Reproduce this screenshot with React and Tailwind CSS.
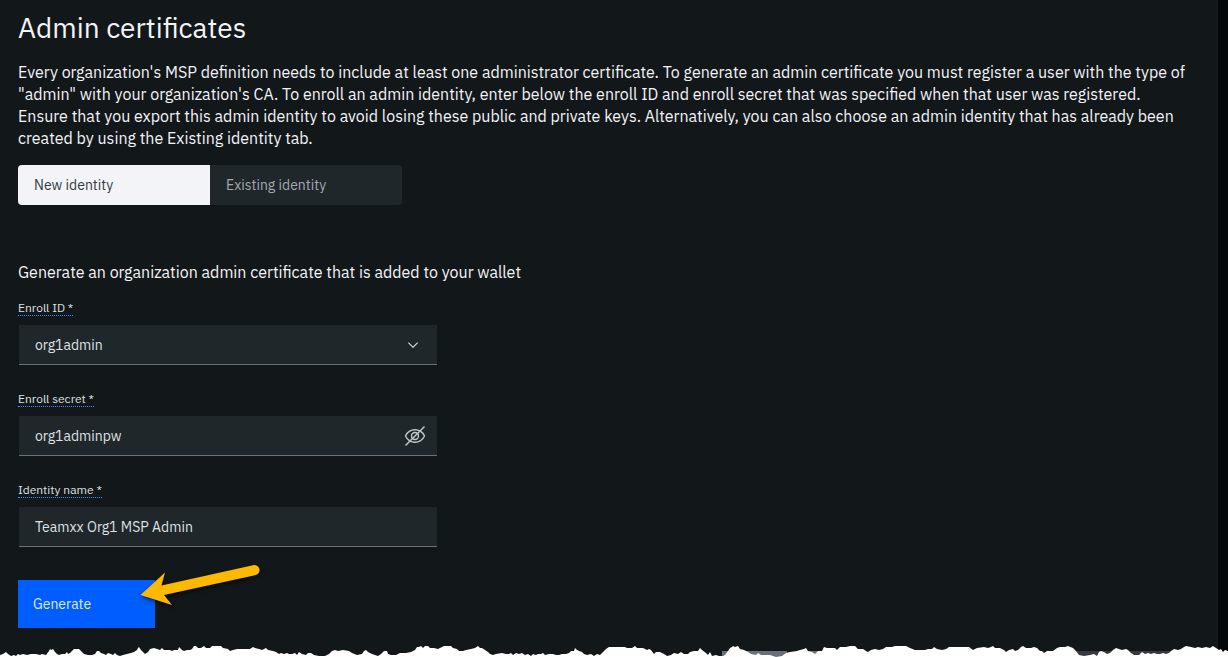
import { useState } from "react";

const edgePoints =
  "0,13 3,12 6,10 8,12 11,14 14,13 16,14 18,12 20,13 23,12 27,13 31,12 36,12 40,13 42,12 46,13 49,9 50,7 51,8 53,7 55,10 57,12 59,13 62,12 65,12 67,10 68,12 70,11 74,7 77,7 79,7 82,10 84,12 88,13 92,13 95,12 97,9 99,9 101,11 104,12 106,13 108,11 111,12 113,13 115,11 117,13 120,14 123,13 127,12 131,11 134,10 137,8 138,6 139,5 141,8 143,10 145,12 148,10 150,7 154,6 157,7 160,8 162,6 164,8 167,8 170,8 172,9 174,8 178,8 179,5 182,8 184,9 187,8 190,8 192,7 194,4 196,4 198,6 201,6 204,4 206,6 210,6 212,4 221,4 223,6 228,7 230,9 233,8 237,7 250,7 253,5 255,6 259,7 262,8 264,7 266,6 268,8 273,9 276,10 279,12 281,11 284,12 287,11 289,12 292,12 295,11 297,13 299,10 302,12 306,13 308,11 311,11 314,13 319,14 325,14 329,12 332,9 335,8 338,9 343,8 349,9 352,11 357,13 362,12 364,9 366,8 368,10 372,12 375,13 378,14 381,12 384,9 387,9 388,12 391,13 396,13 400,11 406,11 411,10 415,8 417,5 419,5 421,4 423,6 425,4 428,4 430,6 434,6 438,7 442,5 444,4 451,4 453,6 457,7 459,9 463,9 466,8 471,7 475,6 478,4 480,6 482,6 485,8 488,10 490,12 493,13 496,12 502,11 506,12 509,12 511,11 513,13 516,11 519,12 522,11 525,13 528,12 531,14 533,12 536,13 538,12 541,12 543,11 545,13 549,12 553,12 556,13 559,13 562,12 566,12 569,11 571,9 574,9 575,6 577,8 579,9 582,10 584,12 587,13 591,12 594,14 597,12 600,13 603,10 606,7 609,5 625,5 627,6 632,6 635,4 637,6 643,6 647,8 649,7 651,8 654,12 656,10 660,10 664,12 667,14 671,13 674,11 678,12 681,10 684,12 688,12 690,10 694,9 698,9 700,6 702,8 706,11 708,13 710,10 712,14 716,13 719,14 723,14 725,13 728,9 730,6 732,5 733,4 735,5 738,4 740,7 744,8 748,10 751,12 756,13 758,11 761,13 770,13 776,15 782,14 786,11 790,10 797,9 800,8 804,7 806,6 808,9 812,10 815,12 818,9 822,9 824,5 827,6 835,6 837,8 840,5 846,5 850,4 855,4 858,7 863,7 866,9 868,10 871,8 875,7 879,8 883,7 886,5 892,5 895,4 906,4 910,6 915,8 925,8 928,7 932,7 934,5 937,7 942,8 946,7 949,5 969,5 973,8 977,6 984,5 988,6 991,5 993,4 995,6 1000,6 1004,8 1006,10 1009,8 1013,7 1015,9 1018,8 1021,5 1023,4 1026,6 1031,6 1034,5 1037,6 1040,9 1042,9 1044,11 1047,9 1053,9 1057,6 1060,5 1065,5 1068,4 1073,6 1076,9 1079,13 1084,14 1090,13 1094,12 1097,14 1099,10 1101,9 1104,10 1107,12 1110,11 1113,8 1116,6 1119,7 1122,8 1126,7 1128,8 1131,11 1134,13 1139,13 1142,10 1145,12 1148,11 1151,12 1154,11 1157,12 1160,12 1163,11 1166,12 1169,11 1171,9 1174,7 1178,8 1181,7 1184,5 1186,4 1191,5 1195,6 1198,5 1202,6 1206,5 1210,6 1213,4 1216,6 1219,8 1221,7 1223,10 1225,8 1228,9";

function TornEdge() {
  return (
    <svg
      className="mt-auto block h-[15px] w-[calc(100%+10px)] shrink-0"
      viewBox="0 0 1228 15"
      preserveAspectRatio="none"
      aria-hidden="true"
    >
      <path d="M722 9H787V15H722zM809 9H820V15H809z" fill="#697077" />
      <path d="M1076 9H1112V15H1076zM1128 9H1175V15H1128z" fill="#343a3f" />
      <polygon points={"0,15 " + edgePoints + " 1228,15"} fill="#fff" />
    </svg>
  );
}

function Field({ id, label, children }) {
  return (
    <div className="mb-[27px] w-full max-w-[420px]">
      <label
        htmlFor={id}
        className="block w-fit border-b border-dotted border-[#4589ff] text-xs leading-[14px] text-[#dde1e6]"
      >
        {label}
      </label>
      <div className="relative mx-px mt-[9px]">{children}</div>
    </div>
  );
}

const control =
  "block h-10 w-full appearance-none rounded-none border-b border-[#697077] bg-[#20272a] px-4 text-sm text-[#dde1e6] outline-none";

export default function App() {
  const [tab, setTab] = useState("new");
  const [visible, setVisible] = useState(true);
  const tabClass = (name) =>
    name === tab
      ? "flex-1 bg-[#f2f4f8] px-4 text-left text-[#343a3f]"
      : "flex-1 bg-[#20272a] px-4 text-left text-[#a2a9b0]";

  return (
    <div className="flex min-h-screen flex-col border-r-10 border-[#050809] bg-[#121719] font-['IBM_Plex_Sans',Roboto,sans-serif] text-[#f2f4f8]">
      <main className="px-[18px] pt-2.5">
        <h1 className="text-[28px] leading-9">Admin certificates</h1>
        <p className="mt-[15px] max-w-[1176px] text-base leading-[22px]">
          Every organization's MSP definition needs to include at least one administrator
          certificate. To generate an admin certificate you must register a user with the type
          of "admin" with your organization's CA. To enroll an admin identity, enter below the
          enroll ID and enroll secret that was specified when that user was registered. Ensure
          that you export this admin identity to avoid losing these public and private keys.
          Alternatively, you can also choose an admin identity that has already been created by
          using the Existing identity tab.
        </p>
        <div className="mt-4 flex h-10 w-96 overflow-hidden rounded text-sm">
          <button type="button" className={tabClass("new")} onClick={() => setTab("new")}>
            New identity
          </button>
          <button type="button" className={tabClass("existing")} onClick={() => setTab("existing")}>
            Existing identity
          </button>
        </div>

        <form onSubmit={(e) => e.preventDefault()}>
          <h2 className="mt-14 mb-[18px] text-base leading-[22px]">
            Generate an organization admin certificate that is added to your wallet
          </h2>
          <Field id="enroll-id" label="Enroll ID *">
            <select id="enroll-id" className={control} defaultValue="org1admin">
              <option>org1admin</option>
            </select>
            <svg
              className="pointer-events-none absolute top-3 right-4 size-4"
              viewBox="0 0 16 16"
              fill="#dde1e6"
              aria-hidden="true"
            >
              <path d="M8 11L3 6l.7-.7L8 9.6l4.300-4.300.7.7z" />
            </svg>
          </Field>
          <Field id="enroll-secret" label="Enroll secret *">
            <input
              id="enroll-secret"
              className={control}
              type={visible ? "text" : "password"}
              defaultValue="org1adminpw"
            />
            <button
              type="button"
              aria-label="Toggle secret visibility"
              className="absolute top-2 right-2.5 size-6"
              onClick={() => setVisible(!visible)}
            >
              <svg
                viewBox="0 0 24 24"
                fill="none"
                stroke="#c1c7cd"
                strokeWidth="1.400"
                aria-hidden="true"
              >
                <path d="M2.500 12C4.500 7.800 8 5.800 12 5.800s7.500 2 9.500 6.200c-2 4.200-5.500 6.200-9.500 6.200S4.500 16.200 2.500 12z" />
                <circle cx="12" cy="12" r="3.500" />
                <path d="M2.500 21.500l19-19" />
              </svg>
            </button>
          </Field>
          <Field id="identity-name" label="Identity name *">
            <input id="identity-name" className={control} defaultValue="Teamxx Org1 MSP Admin" />
          </Field>
          <div className="relative mt-[33px] w-fit">
            <button
              type="submit"
              className="block h-12 w-[137px] bg-[#005dff] px-[15px] text-left text-sm text-[#dde9ff]"
            >
              Generate
            </button>
            <svg
              className="pointer-events-none absolute -top-5 left-[115px] h-[50px] w-[135px] drop-shadow-[1px_2px_2px_rgba(0,0,0,0.6)]"
              viewBox="0 0 135 50"
              fill="#fdb900"
              aria-hidden="true"
            >
              <path d="M7.500 35L32 12.500L28.500 25.500L120 5.200C123 4.500 126 6.500 126.500 9C127 12 125 14.500 122 15.200L31 35L39 45z" />
            </svg>
          </div>
        </form>
      </main>
      <TornEdge />
    </div>
  );
}
